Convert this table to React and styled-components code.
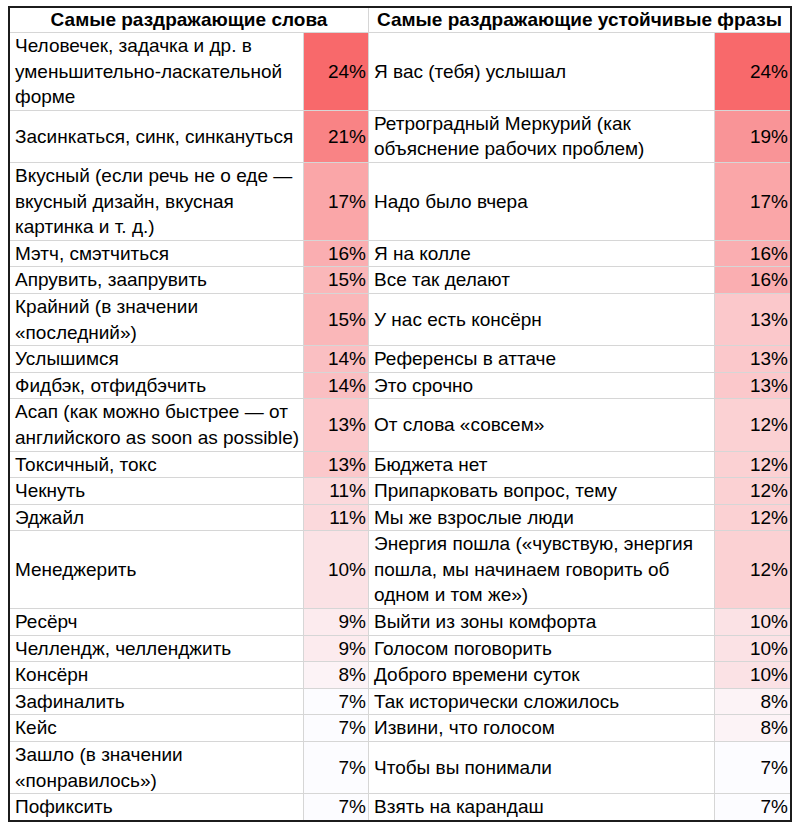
import React from "react";
import styled, { createGlobalStyle } from "styled-components";

const Global = createGlobalStyle`
  html, body { margin: 0; padding: 0; background: #ffffff; }
  body { font-family: "Liberation Sans", Arial, sans-serif; color: #000; }
`;

const Page = styled.div`
  padding: 6px 0 0 8px;
`;

const Sheet = styled.div`
  display: grid;
  grid-template-columns: 294px 65px 346px 75px;
  width: max-content;
  border: 2px solid #1c1c1c;
  background: #ffffff;
  font-size: 19px;
  line-height: 25.6px;
`;

const HeadCell = styled.div`
  grid-column: span 2;
  box-sizing: border-box;
  font-weight: 700;
  text-align: center;
  white-space: nowrap;
  line-height: 24px;
  border-bottom: 1px solid #d6d6d6;
  border-right: ${(p) => (p.$last ? "none" : "1px solid #d6d6d6")};
`;

const TextCell = styled.div`
  box-sizing: border-box;
  display: flex;
  flex-direction: column;
  justify-content: center;
  padding: 0 2px 0 5px;
  white-space: nowrap;
  border-right: 1px solid #d6d6d6;
  border-bottom: ${(p) => (p.$last ? "none" : "1px solid #d6d6d6")};
`;

const PctCell = styled.div`
  box-sizing: border-box;
  display: flex;
  align-items: center;
  justify-content: flex-end;
  padding: 0 2px 0 0;
  white-space: nowrap;
  background: ${(p) => p.$bg};
  border-right: ${(p) => (p.$edge ? "none" : "1px solid #d6d6d6")};
  border-bottom: ${(p) => (p.$last ? "none" : "1px solid #d6d6d6")};
`;

const Line = styled.span`
  display: block;
`;

const rows = [
  [["Человечек, задачка и др. в", "уменьшительно-ласкательной", "форме"], 24, ["Я вас (тебя) услышал"], 24],
  [["Засинкаться, синк, синкануться"], 21, ["Ретроградный Меркурий (как", "объяснение рабочих проблем)"], 19],
  [["Вкусный (если речь не о еде —", "вкусный дизайн, вкусная", "картинка и т. д.)"], 17, ["Надо было вчера"], 17],
  [["Мэтч, смэтчиться"], 16, ["Я на колле"], 16],
  [["Апрувить, заапрувить"], 15, ["Все так делают"], 16],
  [["Крайний (в значении", "«последний»)"], 15, ["У нас есть консёрн"], 13],
  [["Услышимся"], 14, ["Референсы в аттаче"], 13],
  [["Фидбэк, отфидбэчить"], 14, ["Это срочно"], 13],
  [["Асап (как можно быстрее — от", "английского as soon as possible)"], 13, ["От слова «совсем»"], 12],
  [["Токсичный, токс"], 13, ["Бюджета нет"], 12],
  [["Чекнуть"], 11, ["Припарковать вопрос, тему"], 12],
  [["Эджайл"], 11, ["Мы же взрослые люди"], 12],
  [["Менеджерить"], 10, ["Энергия пошла («чувствую, энергия", "пошла, мы начинаем говорить об", "одном и том же»)"], 12],
  [["Ресёрч"], 9, ["Выйти из зоны комфорта"], 10],
  [["Челлендж, челленджить"], 9, ["Голосом поговорить"], 10],
  [["Консёрн"], 8, ["Доброго времени суток"], 10],
  [["Зафиналить"], 7, ["Так исторически сложилось"], 8],
  [["Кейс"], 7, ["Извини, что голосом"], 8],
  [["Зашло (в значении", "«понравилось»)"], 7, ["Чтобы вы понимали"], 7],
  [["Пофиксить"], 7, ["Взять на карандаш"], 7],
];

const MIN = 7;
const MAX = 24;
const lo = [252, 252, 255];
const hi = [248, 105, 107];

function heat(v) {
  const t = Math.max(0, Math.min(1, (v - MIN) / (MAX - MIN)));
  const c = lo.map((a, i) => Math.round(a + (hi[i] - a) * t));
  return `rgb(${c[0]}, ${c[1]}, ${c[2]})`;
}

function Lines({ items }) {
  return items.map((t, i) => <Line key={i}>{t}</Line>);
}

export default function App() {
  return (
    <Page>
      <Global />
      <Sheet>
        <HeadCell>Самые раздражающие слова</HeadCell>
        <HeadCell $last>Самые раздражающие устойчивые фразы</HeadCell>
        {rows.map(([l, lp, r, rp], i) => {
          const last = i === rows.length - 1;
          return (
            <React.Fragment key={i}>
              <TextCell $last={last}>
                <Lines items={l} />
              </TextCell>
              <PctCell $last={last} $bg={heat(lp)}>
                {lp}%
              </PctCell>
              <TextCell $last={last}>
                <Lines items={r} />
              </TextCell>
              <PctCell $last={last} $edge $bg={heat(rp)}>
                {rp}%
              </PctCell>
            </React.Fragment>
          );
        })}
      </Sheet>
    </Page>
  );
}
